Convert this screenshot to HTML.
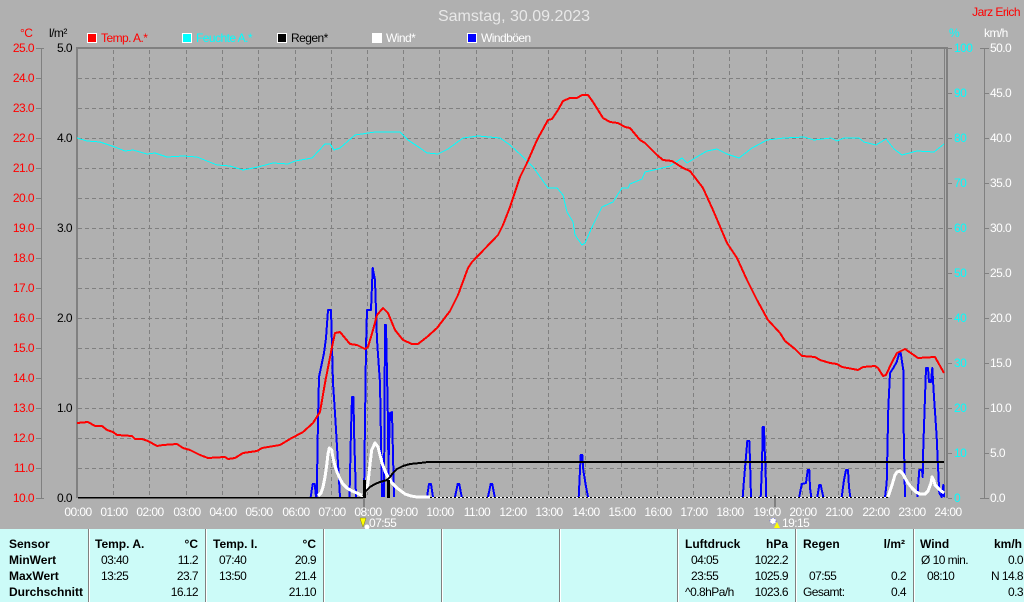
<!DOCTYPE html>
<html lang="de"><head><meta charset="utf-8"><title>Samstag, 30.09.2023</title>
<style>
html,body{margin:0;padding:0;background:#b0b0b0}
svg{display:block;width:1024px;height:602px}
text{font-family:"Liberation Sans",Arial,sans-serif;font-size:12px;letter-spacing:-.55px}
.r{fill:#f00;text-anchor:end}.k{fill:#000;text-anchor:end}.c{fill:#0ff}.w{fill:#fff}
.t{fill:#fff;text-anchor:middle}
.b{font-weight:bold;font-size:12px;fill:#000;letter-spacing:0}.n{fill:#000}.e{text-anchor:end}
.grid line{stroke:#808080;stroke-width:1;stroke-dasharray:4 3}
.ax{stroke:#808080;fill:none}
</style></head><body>
<svg xmlns="http://www.w3.org/2000/svg" width="1024" height="602" viewBox="0 0 1024 602">
<rect width="1024" height="602" fill="#b0b0b0"/>
<text x="514" y="21" style="font-size:16px;letter-spacing:0" fill="#e8e8e8" text-anchor="middle">Samstag, 30.09.2023</text>
<text x="1020" y="16" fill="#f00" text-anchor="end">Jarz Erich</text>
<text x="20" y="37" fill="#f00">°C</text><text x="49" y="37" fill="#000">l/m²</text>
<text x="949" y="37" class="c">%</text><text x="984" y="37" class="w">km/h</text>
<g shape-rendering="crispEdges" stroke="#fff">
<rect x="87.5" y="33.5" width="9" height="9" fill="#f00"/><rect x="182.5" y="33.5" width="9" height="9" fill="#0ff"/><rect x="277.5" y="33.5" width="9" height="9" fill="#000"/><rect x="372.5" y="33.5" width="9" height="9" fill="#fff"/><rect x="467.5" y="33.5" width="9" height="9" fill="#00f"/>
</g>
<text x="101" y="42" fill="#f00">Temp. A.*</text><text x="196" y="42" fill="#0ff">Feuchte A.*</text><text x="291" y="42" fill="#000">Regen*</text><text x="386" y="42" fill="#fff">Wind*</text><text x="481" y="42" fill="#fff">Windböen</text>

<g class="grid" shape-rendering="crispEdges">
<line x1="78" x2="944" y1="78.5" y2="78.5"/><line x1="78" x2="944" y1="108.5" y2="108.5"/><line x1="78" x2="944" y1="138.5" y2="138.5"/><line x1="78" x2="944" y1="168.5" y2="168.5"/><line x1="78" x2="944" y1="198.5" y2="198.5"/><line x1="78" x2="944" y1="228.5" y2="228.5"/><line x1="78" x2="944" y1="258.5" y2="258.5"/><line x1="78" x2="944" y1="288.5" y2="288.5"/><line x1="78" x2="944" y1="318.5" y2="318.5"/><line x1="78" x2="944" y1="348.5" y2="348.5"/><line x1="78" x2="944" y1="378.5" y2="378.5"/><line x1="78" x2="944" y1="408.5" y2="408.5"/><line x1="78" x2="944" y1="438.5" y2="438.5"/><line x1="78" x2="944" y1="468.5" y2="468.5"/>
<line y1="50" y2="498" x1="113.5" x2="113.5"/><line y1="50" y2="498" x1="149.5" x2="149.5"/><line y1="50" y2="498" x1="186.5" x2="186.5"/><line y1="50" y2="498" x1="222.5" x2="222.5"/><line y1="50" y2="498" x1="258.5" x2="258.5"/><line y1="50" y2="498" x1="295.5" x2="295.5"/><line y1="50" y2="498" x1="331.5" x2="331.5"/><line y1="50" y2="498" x1="367.5" x2="367.5"/><line y1="50" y2="498" x1="403.5" x2="403.5"/><line y1="50" y2="498" x1="439.5" x2="439.5"/><line y1="50" y2="498" x1="476.5" x2="476.5"/><line y1="50" y2="498" x1="512.5" x2="512.5"/><line y1="50" y2="498" x1="548.5" x2="548.5"/><line y1="50" y2="498" x1="585.5" x2="585.5"/><line y1="50" y2="498" x1="621.5" x2="621.5"/><line y1="50" y2="498" x1="657.5" x2="657.5"/><line y1="50" y2="498" x1="693.5" x2="693.5"/><line y1="50" y2="498" x1="729.5" x2="729.5"/><line y1="50" y2="498" x1="766.5" x2="766.5"/><line y1="50" y2="498" x1="802.5" x2="802.5"/><line y1="50" y2="498" x1="838.5" x2="838.5"/><line y1="50" y2="498" x1="875.5" x2="875.5"/><line y1="50" y2="498" x1="911.5" x2="911.5"/>
</g>
<g shape-rendering="crispEdges" fill="#808080">
<rect x="76" y="47" width="872" height="2"/><rect x="76" y="47" width="2" height="451"/><rect x="944" y="47" width="1" height="451"/><rect x="946" y="47" width="2" height="451"/>
<rect x="41" y="48" width="1" height="451"/><rect x="36" y="48" width="8" height="1"/>
<rect x="36" y="78" width="5" height="1"/><rect x="36" y="108" width="5" height="1"/><rect x="36" y="138" width="5" height="1"/><rect x="36" y="168" width="5" height="1"/><rect x="36" y="198" width="5" height="1"/><rect x="36" y="228" width="5" height="1"/><rect x="36" y="258" width="5" height="1"/><rect x="36" y="288" width="5" height="1"/><rect x="36" y="318" width="5" height="1"/><rect x="36" y="348" width="5" height="1"/><rect x="36" y="378" width="5" height="1"/><rect x="36" y="408" width="5" height="1"/><rect x="36" y="438" width="5" height="1"/><rect x="36" y="468" width="5" height="1"/><rect x="36" y="498" width="8" height="1"/>
<rect x="984" y="48" width="1" height="451"/><rect x="980" y="48" width="9" height="1"/><rect x="980" y="498" width="9" height="1"/>
<rect x="985" y="93" width="4" height="1"/><rect x="985" y="138" width="4" height="1"/><rect x="985" y="183" width="4" height="1"/><rect x="985" y="228" width="4" height="1"/><rect x="985" y="273" width="4" height="1"/><rect x="985" y="318" width="4" height="1"/><rect x="985" y="363" width="4" height="1"/><rect x="985" y="408" width="4" height="1"/><rect x="985" y="453" width="4" height="1"/>
<rect x="948" y="48" width="4" height="1"/><rect x="948" y="93" width="4" height="1"/><rect x="948" y="138" width="4" height="1"/><rect x="948" y="183" width="4" height="1"/><rect x="948" y="228" width="4" height="1"/><rect x="948" y="273" width="4" height="1"/><rect x="948" y="318" width="4" height="1"/><rect x="948" y="363" width="4" height="1"/><rect x="948" y="408" width="4" height="1"/><rect x="948" y="453" width="4" height="1"/><rect x="948" y="498" width="4" height="1"/>
<rect x="363" y="498" width="2" height="12"/><rect x="774" y="495" width="2" height="12"/>
</g>

<g class="r"><text x="34" y="52">25.0</text><text x="34" y="82">24.0</text><text x="34" y="112">23.0</text><text x="34" y="142">22.0</text><text x="34" y="172">21.0</text><text x="34" y="202">20.0</text><text x="34" y="232">19.0</text><text x="34" y="262">18.0</text><text x="34" y="292">17.0</text><text x="34" y="322">16.0</text><text x="34" y="352">15.0</text><text x="34" y="382">14.0</text><text x="34" y="412">13.0</text><text x="34" y="442">12.0</text><text x="34" y="472">11.0</text><text x="34" y="502">10.0</text></g>
<g class="k"><text x="72" y="52">5.0</text><text x="72" y="142">4.0</text><text x="72" y="232">3.0</text><text x="72" y="322">2.0</text><text x="72" y="412">1.0</text><text x="72" y="502">0.0</text></g>
<g class="c"><text x="954" y="52">100</text><text x="954" y="97">90</text><text x="954" y="142">80</text><text x="954" y="187">70</text><text x="954" y="232">60</text><text x="954" y="277">50</text><text x="954" y="322">40</text><text x="954" y="367">30</text><text x="954" y="412">20</text><text x="954" y="457">10</text><text x="954" y="502">0</text></g>
<g class="w"><text x="990" y="52">50.0</text><text x="990" y="97">45.0</text><text x="990" y="142">40.0</text><text x="990" y="187">35.0</text><text x="990" y="232">30.0</text><text x="990" y="277">25.0</text><text x="990" y="322">20.0</text><text x="990" y="367">15.0</text><text x="990" y="412">10.0</text><text x="990" y="457">5.0</text><text x="990" y="502">0.0</text></g>
<g class="t"><text x="78" y="516">00:00</text><text x="114" y="516">01:00</text><text x="150" y="516">02:00</text><text x="187" y="516">03:00</text><text x="223" y="516">04:00</text><text x="259" y="516">05:00</text><text x="296" y="516">06:00</text><text x="332" y="516">07:00</text><text x="368" y="516">08:00</text><text x="404" y="516">09:00</text><text x="440" y="516">10:00</text><text x="477" y="516">11:00</text><text x="513" y="516">12:00</text><text x="549" y="516">13:00</text><text x="586" y="516">14:00</text><text x="622" y="516">15:00</text><text x="658" y="516">16:00</text><text x="694" y="516">17:00</text><text x="730" y="516">18:00</text><text x="767" y="516">19:00</text><text x="803" y="516">20:00</text><text x="839" y="516">21:00</text><text x="876" y="516">22:00</text><text x="912" y="516">23:00</text><text x="948" y="516">24:00</text></g>

<g fill="none" stroke-linejoin="round" shape-rendering="crispEdges">
<polyline stroke="#0ff" stroke-width="1" points="77,138 87,141 100,142 115,147 125,151 133,150 147,154 155,153 167,157 183,156 197,157 217,165 230,166 243,170 258,167 273,163 288,164 295,161 312,158 325,144 330,144 334,150 340,148 355,135 375,132 400,132 408,140 420,148 427,153 438,154 448,149 463,138 478,136 500,138 510,145 522,156 533,167 548,188 557,188 563,195 567,212 573,222 575,235 582,245 585,243 593,225 602,207 613,202 622,188 628,188 630,184 642,179 645,172 658,169 670,166 682,158 687,163 700,155 707,151 717,149 727,154 739,158 752,148 767,140 784,138 804,137 814,140 831,138 837,141 844,138 859,138 864,142 876,145 886,139 894,149 902,155 917,151 934,152 944,144"/>
<g stroke="#00f" stroke-width="2">
<polyline points="310.7,497 312.7,484 314.7,484 316,497"/>
<polyline points="316.7,497 318,420 319,377 324,353 326,338 328,310 331,310 333,383 335,413 340,497"/>
<polyline points="349.5,497 351,430 352,397 353.5,397 354,430 356,497"/>
<polyline points="364,497 366,347 367,310 371,310 372.7,268 375,280 377,340 380,383 382,497"/>
<polyline points="384,497 385,325 386,325 388,423 388.7,497 388.7,457 390,413 392,412 394,497"/>
<polyline points="427,497 429,484 431,484 433,497"/>
<polyline points="455,497 457.7,484 459.3,484 461.7,497"/>
<polyline points="488,497 490.7,484 492.3,484 494.7,497"/>
<polyline points="578.7,497 580,470 580.7,455 582.3,455 583.3,470 585.7,485 588,497"/>
<polyline points="742.7,497 744,480 745.7,460 747.3,441 749.3,441 750,460 751,497"/>
<polyline points="760.7,497 761.7,473 762.3,450 762.7,427 764,427 764.7,450 765.7,473 766,497"/>
<polyline points="799.3,497 801.7,484 806,483 807.7,470 809.3,470 810,488 811.3,497"/>
<polyline points="817.3,497 819.3,485 820.7,485 823.3,497"/>
<polyline points="841.7,497 844,480 846,470 848,470 849,487 850.3,497"/>
<polyline points="885,497 886.7,483 888.3,408 890,373 893.3,368 896.7,362 899.3,353 900.7,353 903.3,370 903.3,410 905,497"/>
<polyline points="917.3,497 919.3,470 922,470 922.7,477 923.3,447 925,397 926,368 928,368 929,382 931,382 932.3,368 934,397 936.7,437 937.7,460 939.3,493 941.7,497 943.3,485 944,497"/>
</g>
<line x1="430" x2="888" y1="497.5" y2="497.5" stroke="#fff" stroke-width="1"/>
<line x1="430" x2="888" y1="497.5" y2="497.5" stroke="#000" stroke-width="1" stroke-dasharray="2 2"/>
<polyline stroke="#fff" stroke-width="3" points="318,496 321,493 323,487 325,477 327,463 328,454 329.3,448 331.7,450 333,458 335,466 337,472 340,479 343,484 347,488 352,491 357,493 363,496 366,491 368,483 370,464 371.7,450 375,443 378,447 380,455 382,463 385,471 388,477 392,483 397,488 405,494 411,496 417,497 430,497"/>
<polyline stroke="#fff" stroke-width="3" points="888,497 890,491 892,485 895,475 897,472 900,471 903,474 905,478 908,483 912,488 916,492 920,494 925,494 928,491 931,483 932,477 934,481 935,485 938,488 940,490 944,493"/>
<polyline stroke="#000" stroke-width="1.5" points="78,497.5 363,497.5"/>
<polyline stroke="#000" stroke-width="2" points="363,496 366,491 370,487 375,484 380,482 387,480 390,477 393,473 397,469 403,466 410,464 420,463 428,462 944,462"/>
<rect x="363" y="480" width="3" height="18" fill="#000"/><rect x="387" y="480" width="3" height="18" fill="#000"/>
<polyline stroke="#f00" stroke-width="2" points="77,423 88,422 95,426 102,426 107,430 113,432 117,435 132,436 135,439 142,439 148,441 157,446 163,445 177,444 183,448 190,450 200,455 208,458 225,457 228,459 235,458 243,453 257,451 262,448 280,445 290,439 303,432 313,423 320,412 325,383 332,347 335,333 340,332 345,338 350,344 357,345 365,349 368,347 373,330 377,315 383,308 388,313 395,330 403,340 412,344 418,344 427,337 437,328 450,311 458,295 468,268 472,262 498,235 503,225 510,207 520,177 527,163 537,140 548,120 552,119 558,110 563,101 570,98 577,98 582,95 588,95 593,102 603,118 610,122 618,123 625,127 630,128 640,140 645,143 657,155 663,160 672,161 683,168 690,171 703,188 713,210 727,243 737,258 747,280 757,300 768,320 780,333 785,341 795,349 802,356 815,357 820,360 830,363 837,364 842,367 853,369 858,370 863,367 875,366 878,368 883,376 886,375 892,362 897,353 905,349 918,358 935,357 944,373"/>
</g>

<polygon points="360,518 366,518 364.5,523 363,527 361.5,523" fill="#ff0" stroke="#80800a" stroke-width=".5"/>
<circle cx="367" cy="527" r="2.5" fill="#fff"/>
<text x="369" y="527" fill="#fff">07:55</text>
<circle cx="773" cy="521" r="3" fill="#fff" stroke="#00f" stroke-width=".5" stroke-dasharray="1 2"/>
<polygon points="777,522 780,528 774,528" fill="#ff0"/>
<text x="782" y="527" fill="#fff">19:15</text>

<rect x="0" y="529" width="1024" height="73" fill="#ccfbf8"/>
<g shape-rendering="crispEdges" fill="#808080">
<rect x="88" y="529" width="1" height="73"/><rect x="205" y="529" width="1" height="73"/><rect x="323" y="529" width="1" height="73"/><rect x="441" y="529" width="1" height="73"/><rect x="559" y="529" width="1" height="73"/><rect x="677" y="529" width="1" height="73"/><rect x="795" y="529" width="1" height="73"/><rect x="913" y="529" width="1" height="73"/>
</g>
<g shape-rendering="crispEdges" fill="#fff">
<rect x="89" y="529" width="1" height="73"/><rect x="206" y="529" width="1" height="73"/><rect x="324" y="529" width="1" height="73"/><rect x="442" y="529" width="1" height="73"/><rect x="560" y="529" width="1" height="73"/><rect x="678" y="529" width="1" height="73"/><rect x="796" y="529" width="1" height="73"/><rect x="914" y="529" width="1" height="73"/>
</g>
<text x="9" y="548" class="b">Sensor</text><text x="9" y="564" class="b">MinWert</text><text x="9" y="580" class="b">MaxWert</text><text x="9" y="596" class="b">Durchschnitt</text>
<text x="95" y="548" class="b">Temp. A.</text><text x="198" y="548" class="b e">°C</text>
<text x="101" y="564" class="n">03:40</text><text x="198" y="564" class="n e">11.2</text>
<text x="101" y="580" class="n">13:25</text><text x="198" y="580" class="n e">23.7</text>
<text x="198" y="596" class="n e">16.12</text>
<text x="213" y="548" class="b">Temp. I.</text><text x="316" y="548" class="b e">°C</text>
<text x="219" y="564" class="n">07:40</text><text x="316" y="564" class="n e">20.9</text>
<text x="219" y="580" class="n">13:50</text><text x="316" y="580" class="n e">21.4</text>
<text x="316" y="596" class="n e">21.10</text>
<text x="685" y="548" class="b">Luftdruck</text><text x="788" y="548" class="b e">hPa</text>
<text x="691" y="564" class="n">04:05</text><text x="788" y="564" class="n e">1022.2</text>
<text x="691" y="580" class="n">23:55</text><text x="788" y="580" class="n e">1025.9</text>
<text x="685" y="596" class="n">^0.8hPa/h</text><text x="788" y="596" class="n e">1023.6</text>
<text x="803" y="548" class="b">Regen</text><text x="905" y="548" class="b e">l/m²</text>
<text x="809" y="580" class="n">07:55</text><text x="906" y="580" class="n e">0.2</text>
<text x="803" y="596" class="n">Gesamt:</text><text x="906" y="596" class="n e">0.4</text>
<text x="920" y="548" class="b">Wind</text><text x="1022" y="548" class="b e">km/h</text>
<text x="921" y="564" class="n">Ø 10 min.</text><text x="1023" y="564" class="n e">0.0</text>
<text x="927" y="580" class="n">08:10</text><text x="1023" y="580" class="n e">N 14.8</text>
<text x="1023" y="596" class="n e">0.3</text>
</svg>
</body></html>
